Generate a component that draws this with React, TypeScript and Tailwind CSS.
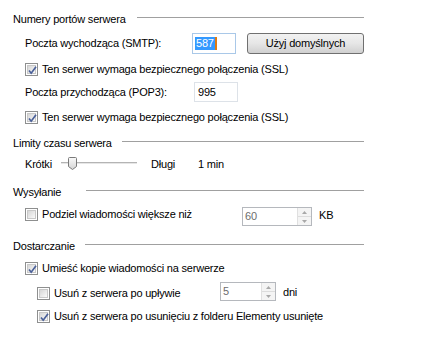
import React from 'react';

type CheckProps = { checked?: boolean };

function CheckBox({ checked }: CheckProps) {
  return (
    <div className="w-[13px] h-[13px] shrink-0 border border-[#8e8f8f] bg-white p-px">
      <div className="relative w-full h-full bg-gradient-to-br from-[#d6d6d6] to-[#fafafa] border border-[#c8c8c8]">
        {checked && (
          <svg className="absolute -left-px -top-px" width="11" height="11" viewBox="0 0 11 11">
            <path d="M2 5.5 L4.2 8.2 L9 1.8" fill="none" stroke="#4a6099" strokeWidth="1.7" />
          </svg>
        )}
      </div>
    </div>
  );
}

function GroupHeader({ title, labelWidth }: { title: string; labelWidth: string }) {
  return (
    <div className="flex items-start h-[13px]">
      <span className={`${labelWidth} whitespace-nowrap`}>{title}</span>
      <div className="flex-1 h-px mt-[4px] bg-[#a0a0a0]" />
    </div>
  );
}

function Spinner({ value, width }: { value: string; width: string }) {
  return (
    <div className={`${width} h-[19px] flex border border-[#b5b8bd] bg-white shrink-0`}>
      <span className="flex-1 pl-[2px] pt-[2px] text-[#6d6d6d]">{value}</span>
      <div className="w-[14px] flex flex-col border-l border-[#e0e0e0]">
        <div className="flex-1 flex items-center justify-center bg-[#f4f4f4] border-b border-[#dcdcdc]">
          <svg width="5" height="3" viewBox="0 0 5 3">
            <path d="M0 3 L2.5 0 L5 3 Z" fill="#a8a8a8" />
          </svg>
        </div>
        <div className="flex-1 flex items-center justify-center bg-[#f4f4f4]">
          <svg width="5" height="3" viewBox="0 0 5 3">
            <path d="M0 0 L2.5 3 L5 0 Z" fill="#a8a8a8" />
          </svg>
        </div>
      </div>
    </div>
  );
}

function CheckRow({ checked, label, className = '' }: CheckProps & { label: string; className?: string }) {
  return (
    <div className={`flex items-center h-[13px] ${className}`}>
      <CheckBox checked={checked} />
      <span className="ml-[4px] whitespace-nowrap">{label}</span>
    </div>
  );
}

export default function App() {
  return (
    <div className="w-[430px] h-[352px] bg-white text-black text-[11px] leading-[13px] tracking-[-0.2px] font-['Liberation_Sans',Arial,sans-serif] overflow-hidden">
      <div className="w-[364px] pl-[13px] pt-[13px]">
        <GroupHeader title="Numery portów serwera" labelWidth="w-[124px]" />

        <div className="flex items-center h-[21px] mt-[7px] pl-[12px]">
          <span className="w-[169px] whitespace-nowrap">Poczta wychodząca (SMTP):</span>
          <div className="w-[44px] h-[21px] flex items-center pl-[2px] border border-[#a9c8e8] bg-white shrink-0">
            <span className="bg-[#3399ff] text-white px-px">587</span>
            <span className="w-[2px] h-[13px] bg-[#e07a10]" />
          </div>
          <button className="ml-[11px] w-[117px] h-[21px] shrink-0 rounded-[3px] border border-[#707070] bg-gradient-to-b from-[#f2f2f2] via-[#e6e6e6] to-[#d0d0d0] text-black">
            Użyj domyślnych
          </button>
        </div>

        <CheckRow checked label="Ten serwer wymaga bezpiecznego połączenia (SSL)" className="mt-[9px] pl-[12px]" />

        <div className="flex items-center h-[20px] mt-[6px] pl-[12px]">
          <span className="w-[169px] whitespace-nowrap">Poczta przychodząca (POP3):</span>
          <div className="w-[44px] h-[20px] flex items-center pl-[3px] border border-[#dde2e8] bg-white shrink-0">
            995
          </div>
        </div>

        <CheckRow checked label="Ten serwer wymaga bezpiecznego połączenia (SSL)" className="mt-[9px] pl-[12px]" />

        <div className="mt-[13px]">
          <GroupHeader title="Limity czasu serwera" labelWidth="w-[109px]" />
        </div>

        <div className="flex items-center h-[14px] mt-[7px] pl-[12px]">
          <span className="w-[36px]">Krótki</span>
          <div className="relative w-[76px] h-[14px] shrink-0">
            <div className="mt-[5px] h-[2px] border-t border-[#b4b4b4] bg-[#e6e6e6]" />
            <svg className="absolute left-[7px] top-0" width="9" height="13" viewBox="0 0 9 13">
              <defs>
                <linearGradient id="thumb" x1="0" y1="0" x2="0" y2="1">
                  <stop offset="0" stopColor="#fafafa" />
                  <stop offset="1" stopColor="#d4d4d4" />
                </linearGradient>
              </defs>
              <path d="M1.5 0.5 H7.5 Q8.5 0.5 8.5 1.5 V9.5 L4.5 12.5 L0.5 9.5 V1.5 Q0.5 0.5 1.5 0.5 Z" fill="url(#thumb)" stroke="#7a7a7a" />
            </svg>
          </div>
          <span className="ml-[14px] w-[47px]">Długi</span>
          <span>1 min</span>
        </div>

        <div className="mt-[15px]">
          <GroupHeader title="Wysyłanie" labelWidth="w-[73px]" />
        </div>

        <div className="flex items-start h-[19px] mt-[8px] pl-[12px]">
          <div className="w-[217px] mt-px">
            <CheckRow label="Podziel wiadomości większe niż" />
          </div>
          <Spinner value="60" width="w-[70px]" />
          <span className="ml-[7px] mt-[2px]">KB</span>
        </div>

        <div className="mt-[14px]">
          <GroupHeader title="Dostarczanie" labelWidth="w-[72px]" />
        </div>

        <CheckRow checked label="Umieść kopie wiadomości na serwerze" className="mt-[9px] pl-[12px]" />

        <div className="flex items-start h-[19px] mt-[7px] pl-[24px]">
          <div className="w-[183px] mt-[5px]">
            <CheckRow label="Usuń z serwera po upływie" />
          </div>
          <Spinner value="5" width="w-[56px]" />
          <span className="ml-[7px] mt-[4px]">dni</span>
        </div>

        <CheckRow checked label="Usuń z serwera po usunięciu z folderu Elementy usunięte" className="mt-[9px] pl-[24px]" />
      </div>
    </div>
  );
}
